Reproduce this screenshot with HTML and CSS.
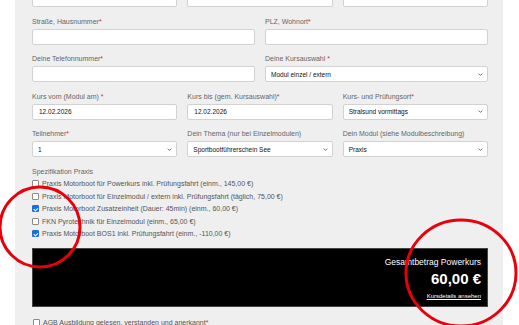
FILE: index.html
```html
<!DOCTYPE html>
<html lang="de">
<head>
    <meta charset="UTF-8">
    <meta name="viewport" content="width=device-width, initial-scale=1.0">
    <title>Anmeldung Powerkurs</title>
    <link rel="stylesheet" href="styles.css">
</head>
<body>
    <div class="page">
        <form class="panel">
            <!-- first row is scrolled away, only the input bottoms show -->
            <div class="row three">
                <div class="field"><input type="text"></div>
                <div class="field"><input type="text"></div>
                <div class="field"><input type="text"></div>
            </div>
            <div class="row two">
                <div class="field"><label>Straße, Hausnummer<span class="req">*</span></label><input type="text"></div>
                <div class="field"><label>PLZ, Wohnort<span class="req">*</span></label><input type="text"></div>
            </div>
            <div class="row two">
                <div class="field"><label>Deine Telefonnummer<span class="req">*</span></label><input type="text"></div>
                <div class="field"><label>Deine Kursauswahl <span class="req">*</span></label>
                    <div class="select"><span>Modul einzel / extern</span><svg viewBox="0 0 8 8"><path d="M2 3l2 2 2-2"/></svg></div>
                </div>
            </div>
            <div class="row three">
                <div class="field"><label>Kurs vom (Modul am) <span class="req">*</span></label><input type="text" value="12.02.2026"></div>
                <div class="field"><label>Kurs bis (gem. Kursauswahl)<span class="req">*</span></label><input type="text" value="12.02.2026"></div>
                <div class="field"><label>Kurs- und Prüfungsort<span class="req">*</span></label>
                    <div class="select"><span>Stralsund vormittags</span><svg viewBox="0 0 8 8"><path d="M2 3l2 2 2-2"/></svg></div>
                </div>
            </div>
            <div class="row three">
                <div class="field"><label>Teilnehmer<span class="req">*</span></label>
                    <div class="select"><span>1</span><svg viewBox="0 0 8 8"><path d="M2 3l2 2 2-2"/></svg></div>
                </div>
                <div class="field"><label>Dein Thema (nur bei Einzelmodulen)</label>
                    <div class="select"><span>Sportbootführerschein See</span><svg viewBox="0 0 8 8"><path d="M2 3l2 2 2-2"/></svg></div>
                </div>
                <div class="field"><label>Dein Modul (siehe Modulbeschreibung)</label>
                    <div class="select"><span>Praxis</span><svg viewBox="0 0 8 8"><path d="M2 3l2 2 2-2"/></svg></div>
                </div>
            </div>

            <div class="options">
                <div class="options-title">Spezifikation Praxis</div>
                <label class="check"><input type="checkbox"> Praxis Motorboot für Powerkurs inkl. Prüfungsfahrt (einm., 145,00 €)</label>
                <label class="check"><input type="checkbox"> Praxis Motorboot für Einzelmodul / extern inkl. Prüfungsfahrt (täglich, 75,00 €)</label>
                <label class="check"><input type="checkbox" checked> Praxis Motorboot Zusatzeinheit (Dauer: 45min) (einm., 60,00 €)</label>
                <label class="check"><input type="checkbox"> FKN Pyrotechnik für Einzelmodul (einm., 65,00 €)</label>
                <label class="check"><input type="checkbox" checked> Praxis Motorboot BOS1 inkl. Prüfungsfahrt (einm., -110,00 €)</label>
            </div>

            <div class="total">
                <div class="total-label">Gesamtbetrag Powerkurs</div>
                <div class="total-sum">60,00 €</div>
                <a class="total-link" href="#">Kursdetails ansehen</a>
            </div>

            <label class="check agb"><input type="checkbox"> AGB Ausbildung gelesen, verstanden und anerkannt<span class="req">*</span></label>
        </form>

        <!-- red marker circles drawn over the screenshot -->
        <svg class="marks" width="519" height="325" viewBox="0 0 519 325">
            <ellipse cx="40" cy="227" rx="40" ry="40"/>
            <ellipse cx="461" cy="273" rx="55" ry="53"/>
        </svg>
    </div>
</body>
</html>
```

FILE: styles.css
```css
body {
    margin: 0;
    background: #fff;
    font-family: "Liberation Sans", Arial, sans-serif;
    overflow: hidden;
}
.page {
    position: relative;
    height: 325px;
    overflow: hidden;
}
.panel {
    width: 488px;
    margin: -9px 0 0 15px;
    padding: 0 15px 0 17px;
    box-sizing: border-box;
    background: #efefef;
    min-height: 360px;
}
.row {
    display: grid;
    column-gap: 10px;
    margin-bottom: 9.5px;
}
.three {
    grid-template-columns: repeat(3, 1fr);
}
.two {
    grid-template-columns: repeat(2, 1fr);
}
.field label {
    display: block;
    font-size: 7px;
    line-height: 10px;
    color: #666;
    margin-bottom: 2px;
    padding-top: 1px;
    margin-top: -1px;
    white-space: nowrap;
}
.req {
    color: #e0262b;
}
.field input,
.select {
    display: block;
    width: 100%;
    height: 16px;
    box-sizing: border-box;
    border: 1px solid #d2d2d2;
    border-radius: 2px;
    background: #fff;
    font-family: inherit;
    font-size: 6.5px;
    color: #111;
    padding: 0 6px;
    margin: 0;
}
.select {
    display: flex;
    align-items: center;
    justify-content: space-between;
    padding: 0 3px 0 5px;
}
.select svg {
    width: 7px;
    height: 7px;
    fill: none;
    stroke: #444;
    stroke-width: 0.9;
}
.options {
    margin-top: 5px;
}
.options-title {
    font-size: 7px;
    line-height: 10px;
    color: #666;
    margin-bottom: 1px;
}
.check {
    display: flex;
    align-items: center;
    height: 12.5px;
    font-size: 7px;
    color: #555;
    white-space: nowrap;
}
.check input {
    appearance: none;
    width: 7px;
    height: 7px;
    box-sizing: border-box;
    margin: 0 3px 0 0;
    border: 1px solid #8a8a8a;
    border-radius: 1px;
    background: #fff;
    display: grid;
    place-content: center;
}
.check input:checked {
    background: #1a6fe0;
    border-color: #1a6fe0;
}
.check input:checked::after {
    content: "";
    width: 3px;
    height: 1.5px;
    border-left: 1px solid #fff;
    border-bottom: 1px solid #fff;
    transform: rotate(-45deg) translate(0, -0.5px);
}
.total {
    margin-top: 8px;
    height: 59px;
    box-sizing: border-box;
    background: #000;
    border: 1px solid #444;
    display: flex;
    flex-direction: column;
    align-items: flex-end;
    padding: 8px 6px 0 0;
    color: #fff;
}
.total-label {
    font-size: 8.5px;
    line-height: 10px;
}
.total-sum {
    font-size: 15px;
    font-weight: bold;
    line-height: 20px;
    margin-top: 2px;
}
.total-link {
    color: #fff;
    font-size: 6px;
    line-height: 8px;
    margin-top: 3px;
}
.agb {
    margin-top: 9px;
    padding-left: 1px;
}
.marks {
    position: absolute;
    left: 0;
    top: 0;
    pointer-events: none;
}
.marks ellipse {
    fill: none;
    stroke: #e8000b;
    stroke-width: 3;
}
```
